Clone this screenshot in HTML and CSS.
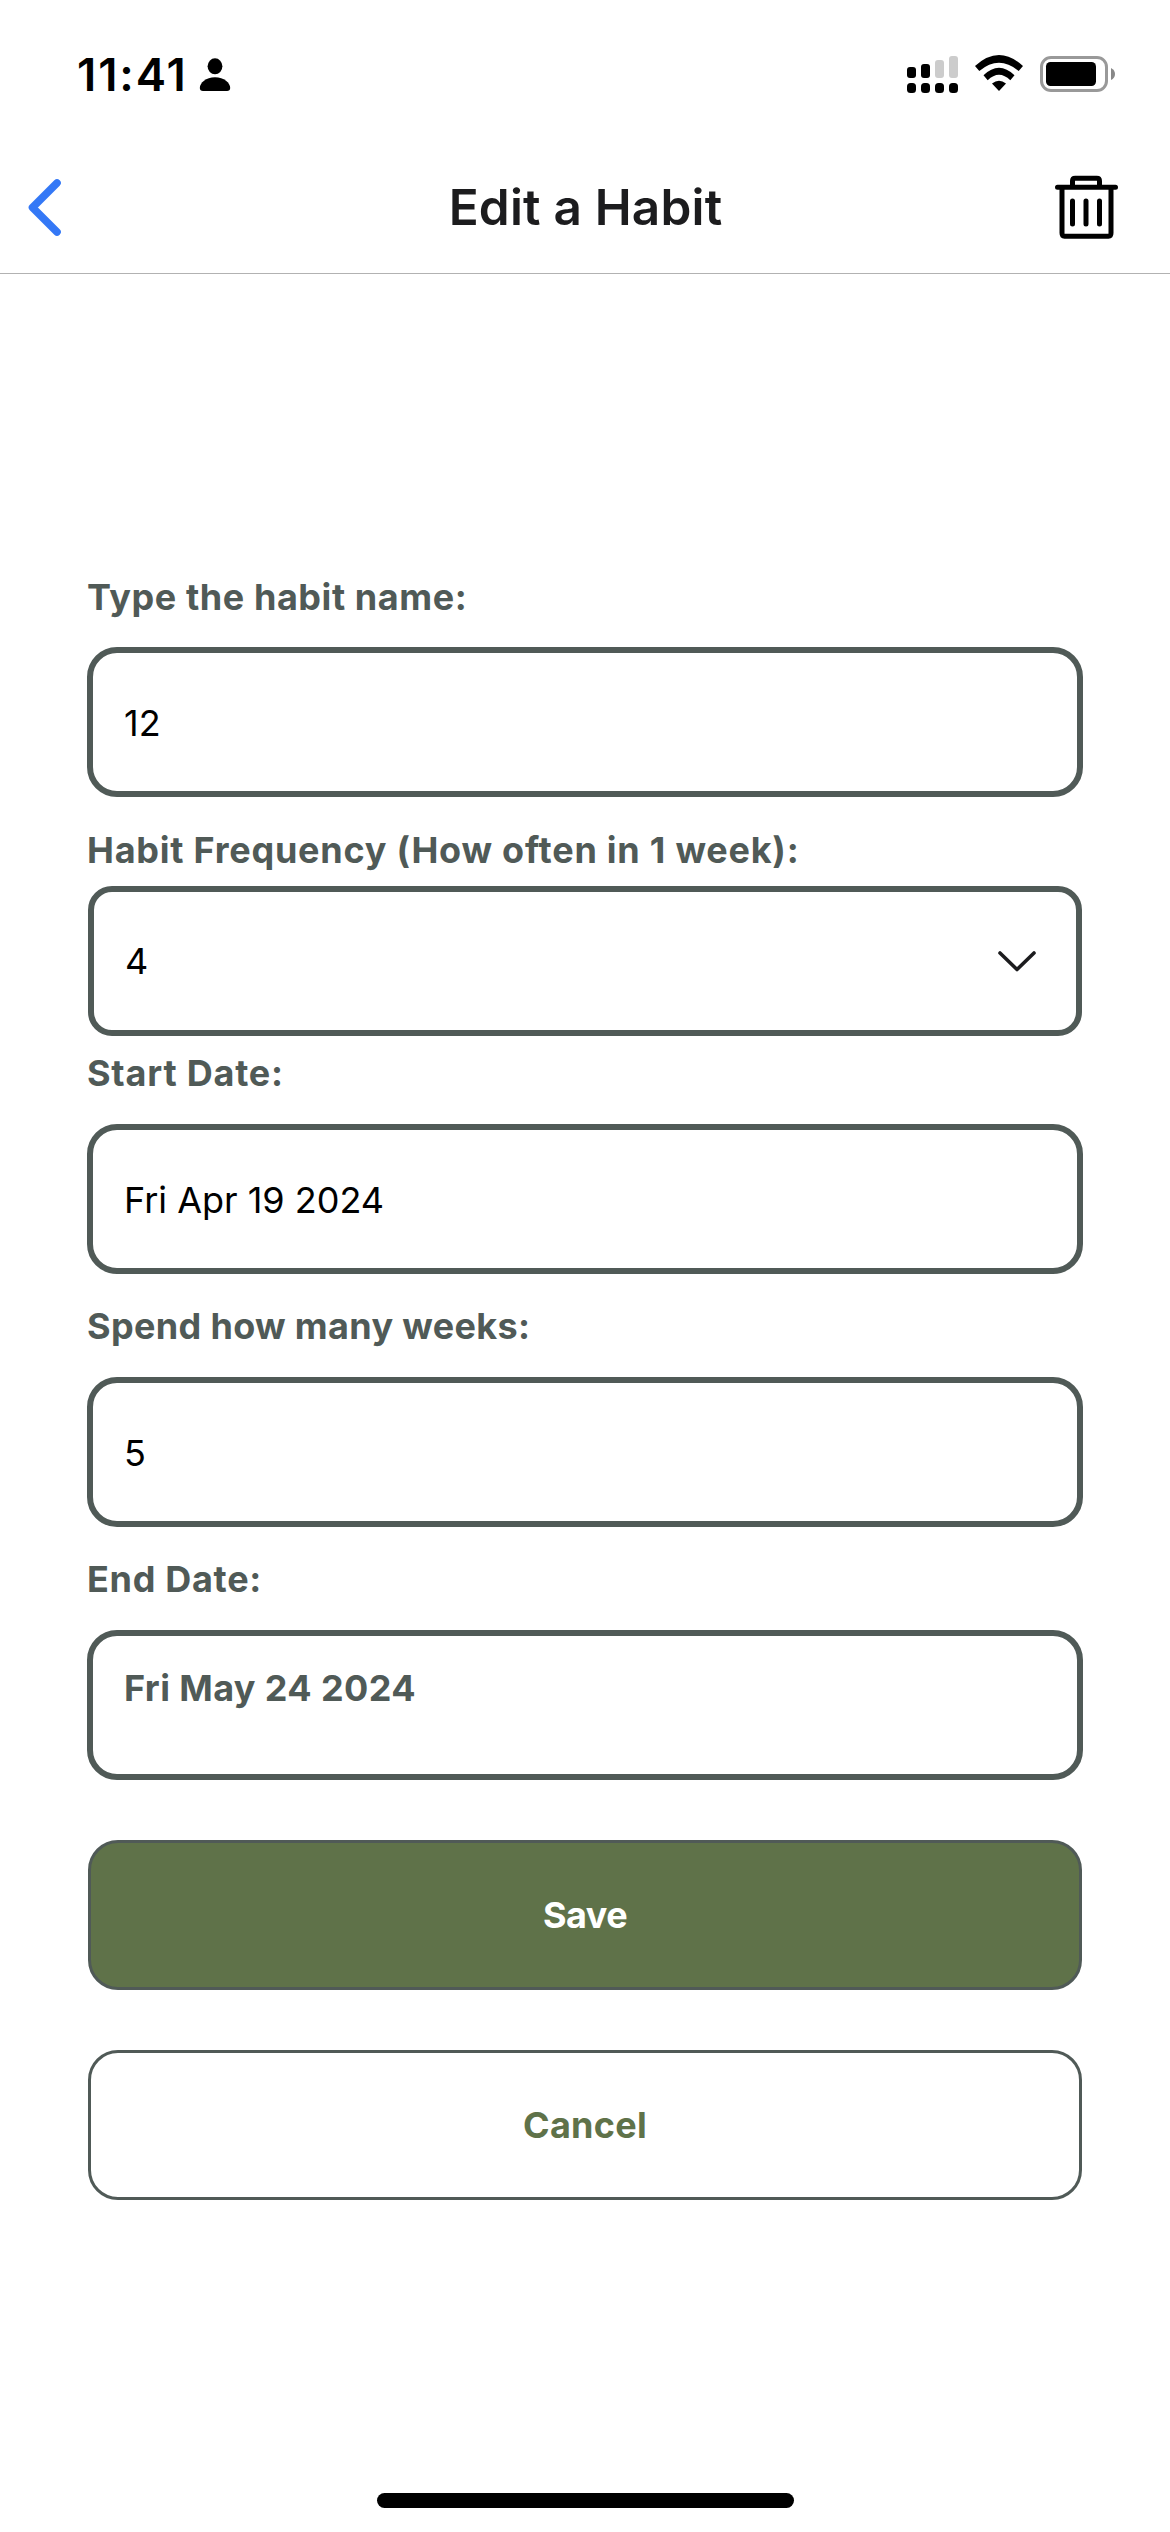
FILE: index.html
```html
<!DOCTYPE html>
<html lang="en">
<head>
<meta charset="utf-8">
<title>Edit a Habit</title>
<link rel="stylesheet" href="styles.css">
</head>
<body>
<div class="screen">
  <div class="status-bar">
    <div class="status-left">
      <span class="time">11:41</span>
      <svg class="person" viewBox="0 0 32 36" width="32" height="36"><ellipse cx="16" cy="9.3" rx="7.4" ry="8"/><path d="M4 34C2 34 .8 33 .8 31C.8 26 7 20.3 16 20.3S31.200 26 31.200 31C31.200 33 30 34 28 34Z"/></svg>
    </div>
    <div class="status-right">
      <svg class="signal" viewBox="0 0 51 37" width="51" height="37"><g fill="#ccc"><rect x="28" y="4" width="9" height="18" rx="3"/><rect x="42" y="0" width="9" height="22" rx="3"/></g><rect y="11" width="9" height="11" rx="3"/><rect x="14" y="8" width="9" height="14" rx="3"/><rect y="27" width="9" height="10" rx="3.500"/><rect x="14" y="27" width="9" height="10" rx="3.500"/><rect x="28" y="27" width="9" height="10" rx="3.500"/><rect x="42" y="27" width="9" height="10" rx="3.500"/></svg>
      <svg class="wifi" viewBox="0 0 48 36" width="48" height="36"><path d="M0 10Q24-12 48 10L43.700 15Q24-1.600 4.300 15Z"/><path d="M8.500 19.200Q24 4.200 39.500 19.200L35.300 24.200Q24 13.200 12.700 24.200Z"/><path d="M17 27.500Q24 22 31 27.500L24 35Z"/></svg>
      <svg class="battery" viewBox="0 0 75 36" width="75" height="36"><rect x="1.500" y="1.500" width="65" height="33" rx="9.500" fill="none" stroke="#999" stroke-width="3"/><rect x="6" y="6" width="50" height="24" rx="4.500"/><path d="M71 12Q75 14 75 18T71 24Z" fill="#888"/></svg>
    </div>
  </div>
  <header class="nav">
    <svg class="back" viewBox="0 0 33 57" width="33" height="57" fill="none" stroke="#3478f6" stroke-width="7.600" stroke-linecap="round" stroke-linejoin="round"><path d="M29 4L4.500 28.500L29 53"/></svg>
    <h1 class="title">Edit a Habit</h1>
    <svg class="trash" viewBox="0 0 63 64" width="63" height="64" fill="none" stroke="#000" stroke-width="5" stroke-linecap="round" stroke-linejoin="round"><path d="M2.500 12.300H60.500M17.500 12V6Q17.500 3.300 20.200 3.300H41.800Q44.500 3.300 44.500 6V12M7 12.300V58Q7 61.200 9.500 61.200H53.500Q56 61.200 56 58V12.300M17.500 26V49M31 26V49M44.500 26V49"/></svg>
  </header>
  <main class="form">
    <div class="field name"><label class="label">Type the habit name:</label><div class="box">12</div></div>
    <div class="field frequency"><label class="label">Habit Frequency (How often in 1 week):</label>
      <div class="box select"><span>4</span><svg class="chevron" viewBox="0 0 38 21" width="38" height="21" fill="none" stroke="#1c1c1e" stroke-width="3.600" stroke-linecap="round" stroke-linejoin="round"><path d="M2 2L19 18.500L36 2"/></svg></div></div>
    <div class="field start"><label class="label">Start Date:</label><div class="box">Fri Apr 19 2024</div></div>
    <div class="field weeks"><label class="label">Spend how many weeks:</label><div class="box">5</div></div>
    <div class="field end"><label class="label">End Date:</label><div class="box readonly">Fri May 24 2024</div></div>
    <button class="button save">Save</button>
    <button class="button cancel">Cancel</button>
  </main>
  <div class="home-indicator"></div>
</div>
</body>
</html>
```
FILE: styles.css
```css
* { box-sizing: border-box; }
body { margin: 0; background: #fff; font-family: Inter, "Liberation Sans", sans-serif; }
.screen { width: 1170px; height: 2532px; display: flex; flex-direction: column; background: #fff; color: #000; }
svg { display: block; flex: none; overflow: visible; }
.status-bar { height: 141px; padding: 56px 55px 0 77px; display: flex; justify-content: space-between; align-items: flex-start; }
.status-left { display: flex; align-items: flex-start; }
.time { width: 122px; margin-top: -9px; font-size: 45.500px; font-weight: 600; line-height: 56px; letter-spacing: 1.900px; white-space: nowrap; }
.person { margin-top: 1px; }
.status-right { display: flex; gap: 17px; }
.nav { height: 133px; padding: 0 52px 0 28px; border-bottom: 1px solid #b2b2b2; display: grid; grid-template-columns: 88px 1fr 63px; align-items: center; }
.title { margin: 0; text-align: center; font-size: 49.500px; line-height: 60px; font-weight: 600; letter-spacing: .2px; color: #1c1c1e; }
.form { padding: 301px 87px 0; display: flex; flex-direction: column; }
.field { padding-top: 30px; display: flex; flex-direction: column; gap: 29px; }
.field.name { padding-top: 0; gap: 28px; }
.field.frequency { padding-top: 31px; gap: 14px; }
.field.start { padding-top: 15px; }
.label { font-size: 36px; line-height: 44px; font-weight: 700; color: #505a57; white-space: nowrap; }
.name .label { letter-spacing: .57px; }
.frequency .label { letter-spacing: .76px; }
.start .label { letter-spacing: .8px; }
.weeks .label { letter-spacing: .34px; }
.end .label { letter-spacing: .7px; }
.box { height: 150px; padding: 2px 31px 0; display: flex; align-items: center; border: 6px solid #505a57; border-radius: 30px; font-size: 36px; line-height: 44px; }
.box.select { margin: 0 1px; padding: 0 40px 0 31px; justify-content: space-between; border-radius: 24px; }
.box.readonly { align-items: flex-start; padding-top: 30px; font-weight: 700; letter-spacing: .4px; color: #505a57; }
.button { height: 150px; margin: 60px 1px 0; padding: 0; border: 3px solid #505a57; border-radius: 30px; font: 700 36px/44px Inter, "Liberation Sans", sans-serif; }
.save { background: #5f7249; color: #fff; letter-spacing: -.5px; }
.cancel { background: #fff; color: #5f7249; letter-spacing: .25px; }
.home-indicator { width: 417px; height: 15px; margin: auto 0 24px 377px; border-radius: 8px; background: #000; }
```
